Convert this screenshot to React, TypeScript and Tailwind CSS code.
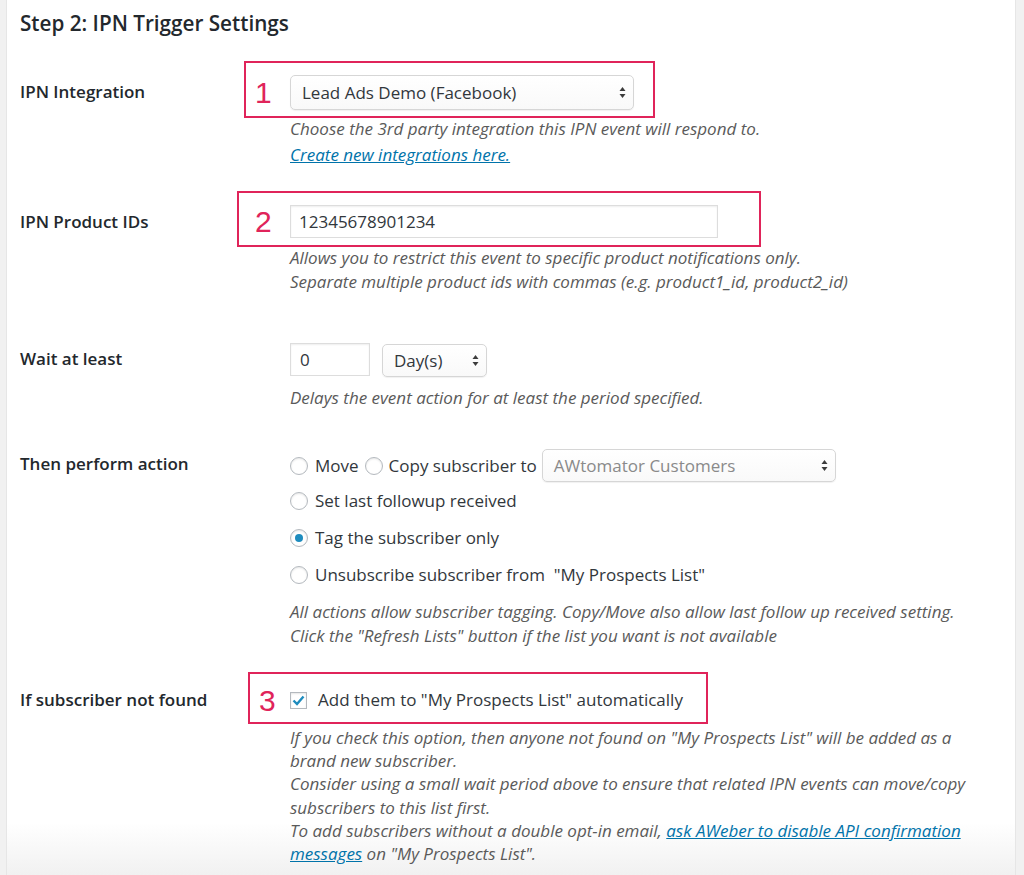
import React from "react";

const FONT = { fontFamily: '"Open Sans", "Noto Sans", sans-serif' };
const NUM_FONT = { fontFamily: '"Liberation Sans", Arial, sans-serif' };

function Arrows() {
  return (
    <svg width="7" height="13" viewBox="0 0 7 13" className="shrink-0">
      <path d="M3.5 1 L6.5 5 L0.5 5 Z" fill="#3c3c3c" />
      <path d="M3.5 12 L6.5 8 L0.5 8 Z" fill="#3c3c3c" />
    </svg>
  );
}

function Select({
  text,
  className,
  muted,
}: {
  text: string;
  className: string;
  muted?: boolean;
}) {
  return (
    <div
      className={
        "flex items-center justify-between rounded-[5px] border border-[#d6d6d6] bg-[linear-gradient(to_bottom,#ffffff,#f9f9f9)] pl-[11px] pr-[7px] text-[17px] shadow-[0_1px_1px_rgba(0,0,0,0.06)] " +
        className
      }
    >
      <span className={muted ? "text-[#8a8a8a]" : "text-[#32373c]"}>{text}</span>
      <Arrows />
    </div>
  );
}

function Radio({ checked }: { checked?: boolean }) {
  return (
    <span className="flex h-[18px] w-[18px] shrink-0 items-center justify-center rounded-full border border-[#b4b9be] bg-white shadow-[inset_0_1px_2px_rgba(0,0,0,0.1)]">
      {checked && <span className="h-[8px] w-[8px] rounded-full bg-[#1e8cbe]" />}
    </span>
  );
}

function Num({ n, w }: { n: string; w: string }) {
  return (
    <span
      style={NUM_FONT}
      className={"text-[30px] leading-[35px] text-[#e0245a] " + w}
    >
      {n}
    </span>
  );
}

const label = "w-[270px] shrink-0 text-[17px] font-semibold leading-6 text-[#23282d]";
const desc = "text-[17px] italic leading-6 text-[#5a5a5a]";

export default function App() {
  return (
    <div style={FONT} className="flex h-[875px] w-full overflow-hidden bg-[#f1f1f1] pl-[6px] pr-[8px]">
      <div className="h-[875px] flex-1 border-x border-[#e6e6e6] bg-[linear-gradient(to_bottom,#ffffff_94%,#f1f1f1)] pl-[13px] pt-[9px]">
        <h2 className="text-[20.7px] font-semibold leading-[28px] text-[#23282d]">
          Step 2: IPN Trigger Settings
        </h2>

        {/* Row 1 */}
        <div className="mt-[24px] flex">
          <div className={label + " mt-[19px]"}>IPN Integration</div>
          <div className="flex-1">
            <div className="-ml-[46px] h-[57px] w-[411px] border-2 border-[#e0245a] pl-[9px] pt-[12px]">
              <div className="flex h-[35px] items-center">
                <Num n="1" w="w-[35px]" />
                <Select text="Lead Ads Demo (Facebook)" className="h-[35px] w-[344px]" />
              </div>
            </div>
            <p className={desc + " leading-[22px]"}>
              Choose the 3rd party integration this IPN event will respond to.
            </p>
            <p className="mt-[4px] text-[17px] italic leading-[22px]">
              <a className="text-[#0073aa] underline">Create new integrations here.</a>
            </p>
          </div>
        </div>

        {/* Row 2 */}
        <div className="mt-[25px] flex">
          <div className={label + " mt-[19px]"}>IPN Product IDs</div>
          <div className="flex-1">
            <div className="-ml-[53px] h-[56px] w-[524px] border-2 border-[#e0245a] pl-[16px] pt-[12px]">
              <div className="flex h-[33px] items-center">
                <Num n="2" w="w-[35px]" />
                <div className="flex h-[33px] w-[428px] items-center border border-[#dddddd] bg-white pl-[8px] text-[17px] text-[#32373c] shadow-[inset_0_1px_2px_rgba(0,0,0,0.07)]">
                  12345678901234
                </div>
              </div>
            </div>
            <p className={desc + " -mt-[1px]"}>
              Allows you to restrict this event to specific product notifications only.
              <br />
              Separate multiple product ids with commas (e.g. product1_id, product2_id)
            </p>
          </div>
        </div>

        {/* Row 3 */}
        <div className="mt-[49px] flex">
          <div className={label + " mt-[4px]"}>Wait at least</div>
          <div className="flex-1">
            <div className="flex items-start gap-3">
              <div className="flex h-[33px] w-[80px] items-center border border-[#dddddd] bg-white pl-[9px] text-[17px] text-[#32373c] shadow-[inset_0_1px_2px_rgba(0,0,0,0.07)]">
                0
              </div>
              <Select text="Day(s)" className="mt-[1px] h-[33px] w-[105px]" />
            </div>
            <p className={desc + " mt-[9px]"}>Delays the event action for at least the period specified.</p>
          </div>
        </div>

        {/* Row 4 */}
        <div className="mt-[39px] flex">
          <div className={label + " mt-[3px]"}>Then perform action</div>
          <div className="flex-1 text-[17px] text-[#32373c]">
            <div className="flex h-[33px] items-center">
              <Radio />
              <span className="ml-[7px]">Move</span>
              <span className="ml-[6px]">
                <Radio />
              </span>
              <span className="ml-[6px]">Copy subscriber to</span>
              <Select text="AWtomator Customers" muted className="ml-[5px] h-[33px] w-[294px]" />
            </div>
            <div className="flex h-[37px] items-center">
              <Radio />
              <span className="ml-[7px]">Set last followup received</span>
            </div>
            <div className="flex h-[37px] items-center">
              <Radio checked />
              <span className="ml-[7px]">Tag the subscriber only</span>
            </div>
            <div className="flex h-[37px] items-center">
              <Radio />
              <span className="ml-[7px] whitespace-pre">Unsubscribe subscriber from  "My Prospects List"</span>
            </div>
            <p className={desc + " mt-[7px]"}>
              All actions allow subscriber tagging. Copy/Move also allow last follow up received setting.
              <br />
              Click the "Refresh Lists" button if the list you want is not available
            </p>
          </div>
        </div>

        {/* Row 5 */}
        <div className="mt-[24px] flex">
          <div className={label + " mt-[16px]"}>If subscriber not found</div>
          <div className="flex-1">
            <div className="-ml-[42px] h-[52px] w-[460px] border-2 border-[#e0245a] pl-[9px] pt-[14px]">
              <div className="flex h-[24px] items-center">
                <Num n="3" w="w-[31px]" />
                <span className="flex h-[17px] w-[17px] shrink-0 items-center justify-center border border-[#b4b9be] bg-white shadow-[inset_0_1px_2px_rgba(0,0,0,0.1)]">
                  <svg width="13" height="11" viewBox="0 0 13 11">
                    <path d="M1.5 5.5 L5 9 L11.5 1.5" fill="none" stroke="#1e8cbe" strokeWidth="2.4" />
                  </svg>
                </span>
                <span className="ml-[11px] text-[17px] text-[#32373c]">
                  Add them to "My Prospects List" automatically
                </span>
              </div>
            </div>
            <p className={desc + " mt-[2px] max-w-[720px] leading-[23.2px]"}>
              If you check this option, then anyone not found on "My Prospects List" will be added as a
              <br />
              brand new subscriber.
              <br />
              Consider using a small wait period above to ensure that related IPN events can move/copy
              <br />
              subscribers to this list first.
              <br />
              To add subscribers without a double opt-in email,{" "}
              <a className="text-[#0073aa] underline">ask AWeber to disable API confirmation</a>
              <br />
              <a className="text-[#0073aa] underline">messages</a> on "My Prospects List".
            </p>
          </div>
        </div>
      </div>
    </div>
  );
}
